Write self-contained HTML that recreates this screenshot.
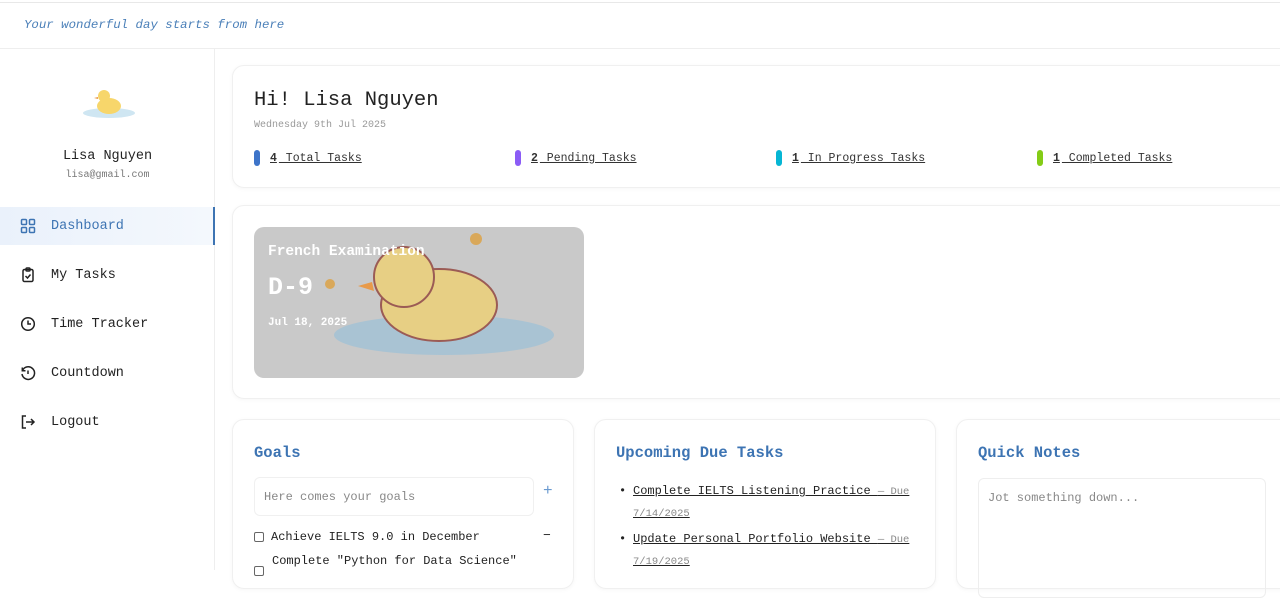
<!DOCTYPE html>
<html><head><meta charset="utf-8">
<style>
*{box-sizing:border-box;margin:0;padding:0}
body{width:1280px;height:570px;overflow:hidden;background:#fff;font-family:"Liberation Mono",monospace;color:#222;position:relative}
.top{position:absolute;left:0;top:2px;width:1280px;height:47px;border-top:1px solid #e8e8e8;border-bottom:1px solid #eee;}
.top span{position:absolute;left:24px;top:15px;font-size:12.4px;font-style:italic;color:#4a7fb8}
.side{position:absolute;left:0;top:49px;width:215px;height:521px;border-right:1px solid #eee}
.name{position:absolute;left:0;width:215px;text-align:center;top:100px;font-size:13.5px;color:#222}
.mail{position:absolute;left:0;width:215px;text-align:center;top:121px;font-size:10px;color:#777}
.nav{position:absolute;left:0;width:215px;height:38px;font-size:13.5px;display:flex;align-items:center}
.nav svg{position:absolute;left:20px}
.nav span{position:absolute;left:51px}
.nav.act{background:linear-gradient(90deg,#eaf1fb,#f4f8fd);color:#3d74b3;border-right:2px solid #3d74b3}
.card{position:absolute;background:#fff;border:1px solid #f0f0f0;border-radius:12px;box-shadow:0 1px 4px rgba(0,0,0,.04)}
.stat{position:absolute;top:150px;font-size:11.5px;display:flex;align-items:center}
.stat i{display:inline-block;width:6px;height:16px;border-radius:3px;margin-right:10px}
.stat u{color:#333;text-decoration:underline}
.stat b{margin-right:2px}
h3{position:absolute;font-size:15.5px;color:#3d74b3;font-weight:bold}
</style></head><body>
<div class="top"><span>Your wonderful day starts from here</span></div>
<div class="side">
<svg style="position:absolute;left:80px;top:35px" width="58" height="38" viewBox="0 0 58 38"><ellipse cx="29" cy="29" rx="26" ry="5" fill="#cfe6f2"/><ellipse cx="29" cy="22" rx="12" ry="8" fill="#f7d66b"/><circle cx="24" cy="12" r="6" fill="#f7d66b"/><path d="M18 13l-4 1 4 1z" fill="#e89a4a"/></svg>
<div class="name">Lisa Nguyen</div>
<div class="mail">lisa@gmail.com</div>
<div class="nav act" style="top:158px"><svg width="16" height="16" viewBox="0 0 16 16" fill="none" stroke="#3d74b3" stroke-width="1.5"><rect x="1.5" y="1.5" width="5" height="5" rx="1"/><rect x="9.5" y="1.5" width="5" height="5" rx="1"/><rect x="1.5" y="9.5" width="5" height="5" rx="1"/><rect x="9.5" y="9.5" width="5" height="5" rx="1"/></svg><span>Dashboard</span></div>
<div class="nav" style="top:207px"><svg width="16" height="16" viewBox="0 0 16 16" fill="none" stroke="#222" stroke-width="1.5"><rect x="3" y="2.5" width="10" height="12" rx="1.5"/><rect x="6" y="1" width="4" height="3" rx="1"/><path d="M5.5 9l2 2 3-3.5"/></svg><span>My Tasks</span></div>
<div class="nav" style="top:256px"><svg width="16" height="16" viewBox="0 0 16 16" fill="none" stroke="#222" stroke-width="1.5"><circle cx="8" cy="8" r="6.3"/><path d="M8 4.5V8h3"/></svg><span>Time Tracker</span></div>
<div class="nav" style="top:305px"><svg width="16" height="16" viewBox="0 0 16 16" fill="none" stroke="#222" stroke-width="1.5"><path d="M2.5 5.5A6.3 6.3 0 1 1 2 9"/><path d="M2.3 2.5v3.2h3.2"/><path d="M8 5.5v3.5"/></svg><span>Countdown</span></div>
<div class="nav" style="top:354px"><svg width="16" height="16" viewBox="0 0 16 16" fill="none" stroke="#222" stroke-width="1.5"><path d="M6 2H2.5v12H6"/><path d="M6 8h8M11 5l3 3-3 3"/></svg><span>Logout</span></div>
</div>

<div class="card" style="left:232px;top:65px;width:1070px;height:123px">
<div style="position:absolute;left:21px;top:23px;font-size:20.5px">Hi! Lisa Nguyen</div>
<div style="position:absolute;left:21px;top:54px;font-size:10px;color:#999">Wednesday 9th Jul 2025</div>
<div class="stat" style="left:21px;top:84px"><i style="background:#3d74c9"></i><u><b>4</b> Total Tasks</u></div>
<div class="stat" style="left:282px;top:84px"><i style="background:#8b5cf6"></i><u><b>2</b> Pending Tasks</u></div>
<div class="stat" style="left:543px;top:84px"><i style="background:#06b6d4"></i><u><b>1</b> In Progress Tasks</u></div>
<div class="stat" style="left:804px;top:84px"><i style="background:#84cc16"></i><u><b>1</b> Completed Tasks</u></div>
</div>

<div class="card" style="left:232px;top:205px;width:1070px;height:194px">
<div style="position:absolute;left:21px;top:21px;width:330px;height:151px;border-radius:10px;background:#c9c9c9;overflow:hidden">
<svg width="330" height="151" style="position:absolute;left:0;top:0"><ellipse cx="190" cy="108" rx="110" ry="20" fill="#a9c3d3"/><ellipse cx="185" cy="78" rx="58" ry="36" fill="#e7cf84" stroke="#9b5b55" stroke-width="2"/><circle cx="150" cy="50" r="30" fill="#e7cf84" stroke="#9b5b55" stroke-width="2"/><path d="M118 55l-14 4 16 5z" fill="#e89a4a"/><circle cx="222" cy="12" r="6" fill="#d9a85a"/><circle cx="76" cy="57" r="5" fill="#d9a85a"/></svg>
<div style="position:absolute;left:14px;top:17px;color:#fff;font-weight:bold;font-size:14.5px">French Examination</div>
<div style="position:absolute;left:14px;top:46px;color:#fff;font-weight:bold;font-size:25px">D-9</div>
<div style="position:absolute;left:14px;top:90px;color:#fff;font-weight:bold;font-size:11px">Jul 18, 2025</div>
</div></div>

<div class="card" style="left:232px;top:419px;width:342px;height:170px">
<h3 style="left:21px;top:24px">Goals</h3>
<div style="position:absolute;left:21px;top:57px;width:280px;height:39px;border:1px solid #f0f0f0;border-radius:6px;font-size:12px;color:#888;padding:12px 9px">Here comes your goals</div>
<div style="position:absolute;left:310px;top:62px;color:#6a9ad0;font-size:16px">+</div>
<div style="position:absolute;left:21px;top:110px;font-size:12px;display:flex;align-items:center"><span style="width:10px;height:10px;border:1px solid #666;border-radius:2px;margin-right:7px"></span>Achieve IELTS 9.0 in December</div>
<div style="position:absolute;left:310px;top:108px;font-size:13px">−</div>
<div style="position:absolute;left:39px;top:134px;font-size:12px">Complete "Python for Data Science"</div>
<span style="position:absolute;left:21px;top:146px;width:10px;height:10px;border:1px solid #666;border-radius:2px"></span>
</div>

<div class="card" style="left:594px;top:419px;width:342px;height:170px">
<h3 style="left:21px;top:24px">Upcoming Due Tasks</h3>
<div style="position:absolute;left:24px;top:61px;font-size:12px;line-height:21px;width:300px">
<div style="position:relative;padding-left:14px"><span style="position:absolute;left:0">•</span><u>Complete IELTS Listening Practice <span style="color:#888;font-size:10.5px">— Due 7/14/2025</span></u></div>
<div style="position:relative;padding-left:14px;margin-top:4px"><span style="position:absolute;left:0">•</span><u>Update Personal Portfolio Website <span style="color:#888;font-size:10.5px">— Due 7/19/2025</span></u></div>
</div></div>

<div class="card" style="left:956px;top:419px;width:342px;height:170px">
<h3 style="left:21px;top:24px">Quick Notes</h3>
<div style="position:absolute;left:21px;top:58px;width:288px;height:120px;border:1px solid #eee;border-radius:6px;font-size:12px;color:#888;padding:12px 9px">Jot something down...</div>
</div>
</body></html>
